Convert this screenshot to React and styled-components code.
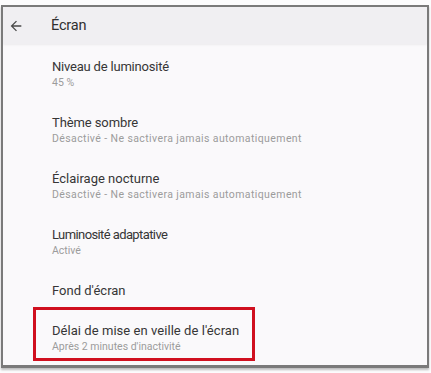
import React from "react";
import styled, { createGlobalStyle } from "styled-components";

const Global = createGlobalStyle`
  html, body { margin: 0; padding: 0; background: #fcfcfd; }
  body { font-family: Roboto, "Noto Sans", Arial, sans-serif; }
`;

const Page = styled.div`
  width: 431px;
  height: 373px;
  box-sizing: border-box;
  padding: 5px 2px 0 1px;
  background: #fcfcfd;
`;

const Frame = styled.div`
  box-sizing: border-box;
  height: 363px;
  border: 2px solid #7a7a7a;
  border-bottom-width: 3px;
  background: #faf9fb;
  display: flex;
  flex-direction: column;
  box-shadow: 0 2px 2px rgba(0, 0, 0, 0.25);
  overflow: hidden;
`;

const Header = styled.div`
  height: 37px;
  flex: none;
  display: flex;
  align-items: center;
  background: #f0eff2;
  box-shadow: 0 1px 2px rgba(0, 0, 0, 0.06);
`;

const Back = styled.div`
  width: 43px;
  padding-left: 5px;
  display: flex;
  align-items: center;
  color: #4a4a4a;
`;

const HeaderTitle = styled.div`
  font-size: 14.5px;
  color: #2f2f2f;
  letter-spacing: -0.2px;
`;

const List = styled.div`
  display: flex;
  flex-direction: column;
  padding-top: 2px;
`;

const Row = styled.div`
  padding: ${(p) => (p.$single ? "12px 0 8px 49px" : "12px 0 12px 49px")};
  display: flex;
  flex-direction: column;
`;

const Highlight = styled.div`
  margin-left: 30px;
  width: 222px;
  box-sizing: border-box;
  border: 3px solid #d0101f;
  padding: 12px 0 4px 16px;
  display: flex;
  flex-direction: column;
`;

const Title = styled.div`
  font-size: 13px;
  line-height: 17px;
  color: #363636;
  letter-spacing: ${(p) => p.$spacing ?? 0}px;
  white-space: nowrap;
`;

const Sub = styled.div`
  font-size: 10.5px;
  line-height: 15px;
  color: #9c9c9c;
  letter-spacing: ${(p) => p.$spacing ?? 0}px;
  white-space: nowrap;
`;

const items = [
  { t: "Niveau de luminosité", s: "45 %", ts: -0.2 },
  { t: "Thème sombre", s: "Désactivé - Ne sactivera jamais automatiquement", ts: -0.1, ss: 0.4 },
  { t: "Éclairage nocturne", s: "Désactivé - Ne sactivera jamais automatiquement", ts: 0, ss: 0.4 },
  { t: "Luminosité adaptative", s: "Activé", ts: -0.6 },
  { t: "Fond d'écran", ts: 0 },
];

export default function App() {
  return (
    <>
      <Global />
      <Page>
        <Frame>
          <Header>
            <Back>
              <svg width="16" height="16" viewBox="0 0 24 24" fill="currentColor">
                <path d="M20 11H7.83l5.59-5.59L12 4l-8 8 8 8 1.41-1.41L7.83 13H20v-2z" />
              </svg>
            </Back>
            <HeaderTitle>Écran</HeaderTitle>
          </Header>
          <List>
            {items.map((it) => (
              <Row key={it.t} $single={!it.s}>
                <Title $spacing={it.ts}>{it.t}</Title>
                {it.s && <Sub $spacing={it.ss}>{it.s}</Sub>}
              </Row>
            ))}
            <Highlight>
              <Title $spacing={0.05}>Délai de mise en veille de l'écran</Title>
              <Sub>Après 2 minutes d'inactivité</Sub>
            </Highlight>
          </List>
        </Frame>
      </Page>
    </>
  );
}
